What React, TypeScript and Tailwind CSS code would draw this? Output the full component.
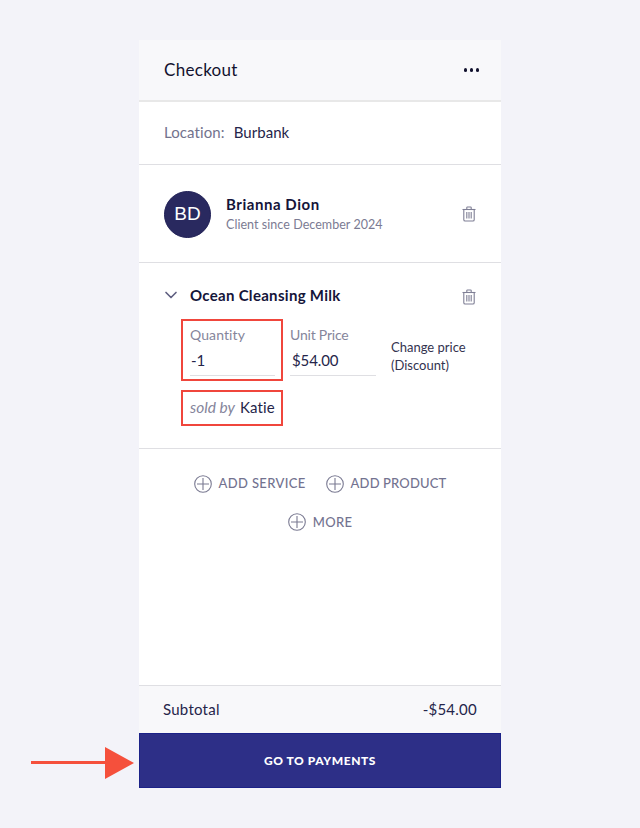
import React from 'react';
import { ChevronDown } from 'lucide-react';

const font = "font-['Lato','Noto_Sans',sans-serif]";

const Trash: React.FC<{ className?: string }> = ({ className }) => (
  <svg className={className} width="14" height="16" viewBox="0 0 14 16" fill="none" stroke="#7f7f95" strokeWidth="1.1">
    <path d="M0.5 3.5h13" />
    <path d="M4.8 3.2V1.6c0-.4.3-.6.6-.6h3.2c.3 0 .6.2.6.6v1.6" />
    <path d="M1.8 3.5v10.2c0 .8.5 1.3 1.3 1.3h7.8c.8 0 1.3-.5 1.3-1.3V3.5" />
    <path d="M4.8 6v6.5M7 6v6.5M9.2 6v6.5" />
  </svg>
);

const PlusAction: React.FC<{ label: string; tight?: boolean }> = ({ label, tight }) => (
  <div className="flex items-center gap-[7px]">
    <svg width="18" height="18" viewBox="0 0 18 18" fill="none" stroke="#7a7a92" strokeWidth="1.1">
      <circle cx="9" cy="9" r="8.3" />
      <path d="M9 3v12M3 9h12" />
    </svg>
    <span className={`text-[13px] font-medium text-[#737390] ${tight ? 'tracking-[0.15px]' : 'tracking-[0.35px]'}`}>{label}</span>
  </div>
);

export default function App() {
  return (
    <div className={`relative h-[828px] w-[640px] bg-[#f3f3f9] pt-10 ${font}`}>
      <div className="relative ml-[139px] flex h-[748px] w-[362px] flex-col bg-white">
        <header className="flex h-[62px] items-start justify-between border-b-2 border-[#e8e8e8] bg-[#f8f8fa] pl-[25px] pr-[22px] pt-[19px]">
          <h1 className="text-[17px] leading-[22px] tracking-[0.3px] text-[#12122e]">Checkout</h1>
          <div className="mt-[9px] flex gap-[2.5px]">
            <span className="size-[3.5px] rounded-full bg-[#12122e]" />
            <span className="size-[3.5px] rounded-full bg-[#12122e]" />
            <span className="size-[3.5px] rounded-full bg-[#12122e]" />
          </div>
        </header>

        <div className="flex h-[63px] items-start gap-[9px] border-b border-[#dfdfe3] pl-[25px] pt-[20px] text-[15px] leading-[20px]">
          <span className="tracking-[0.1px] text-[#73738d]">Location:</span>
          <span className="tracking-[0.05px] text-[#25254a]">Burbank</span>
        </div>

        <div className="flex h-[98px] items-center border-b border-[#dfdfe3] pl-[25px] pr-[25px]">
          <div className="mt-[2px] flex size-[47px] items-center justify-center rounded-full border border-[#1f1f55] bg-[#29295f] font-['Liberation_Sans',sans-serif] text-[19px] text-white">
            BD
          </div>
          <div className="ml-[15px] flex-1">
            <div className="text-[15px] font-bold leading-[20px] tracking-[0.55px] text-[#15153a]">Brianna Dion</div>
            <div className="mt-[2px] text-[12.5px] leading-[18px] tracking-[0.05px] text-[#7b7b93]">Client since December 2024</div>
          </div>
          <Trash />
        </div>

        <div className="h-[186px] border-b border-[#dfdfe3] pl-[25px] pr-[25px]">
          <div className="flex h-[43px] items-start pt-[22px]">
            <ChevronDown size={20} strokeWidth={2} color="#5f5f80" className="ml-[-3px]" />
            <span className="ml-[9px] flex-1 text-[15px] font-bold leading-[20px] tracking-[0.3px] text-[#15153a]">Ocean Cleansing Milk</span>
            <Trash className="mt-[4px]" />
          </div>

          <div className="ml-[17px] mt-[13px] flex items-start">
            <div className="h-[62px] w-[102px] border-2 border-[#f0463c] pl-[7px] pr-[6px] pt-[4px]">
              <div className="text-[14px] leading-[20px] tracking-[0.1px] text-[#85859b]">Quantity</div>
              <div className="mt-[2px] h-[29px] border-b border-[#dfdfe3] pl-[1px] text-[15px] leading-[26px] text-[#25254a]">-1</div>
            </div>
            <div className="ml-[7px] w-[86px] pt-[6px]">
              <div className="text-[14px] leading-[20px] tracking-[-0.2px] text-[#85859b]">Unit Price</div>
              <div className="mt-[2px] h-[29px] border-b border-[#dfdfe3] pl-[2px] text-[15px] leading-[26px] tracking-[-0.1px] text-[#25254a]">$54.00</div>
            </div>
            <div className="ml-[15px] pt-[19px] text-[13px] leading-[18px] text-[#33334f]">
              Change price
              <br />
              (Discount)
            </div>
          </div>

          <div className="ml-[17px] mt-[9px] flex h-[36px] w-[102px] items-center gap-[5px] border-2 border-[#f0463c] pb-[1px] pl-[7px] text-[15px]">
            <span className="text-[15.5px] italic text-[#85859b]">sold by</span>
            <span className="tracking-[0.1px] text-[#25254a]">Katie</span>
          </div>
        </div>

        <div className="flex flex-1 flex-col items-center border-b border-[#dfdfe3] pt-[25px]">
          <div className="flex gap-[20px]">
            <PlusAction label="ADD SERVICE" />
            <PlusAction label="ADD PRODUCT" tight />
          </div>
          <div className="mt-[19px]">
            <PlusAction label="MORE" />
          </div>
        </div>

        <div className="flex h-[47px] items-center justify-between bg-[#f8f8fa] pl-6 pr-6 text-[15px] tracking-[0.25px] text-[#25254a]">
          <span>Subtotal</span>
          <span>-$54.00</span>
        </div>

        <button className="h-[55px] w-full border border-[#1c2288] bg-[#2d2f87] text-[12px] font-black tracking-[0.55px] text-white">
          GO TO PAYMENTS
        </button>

        <svg className="absolute left-[-108px] top-[707px]" width="104" height="32" viewBox="0 0 104 32" fill="#f5503c">
          <rect x="0" y="14" width="76" height="3" />
          <polygon points="74,0 103,16 74,32" />
        </svg>
      </div>
    </div>
  );
}
